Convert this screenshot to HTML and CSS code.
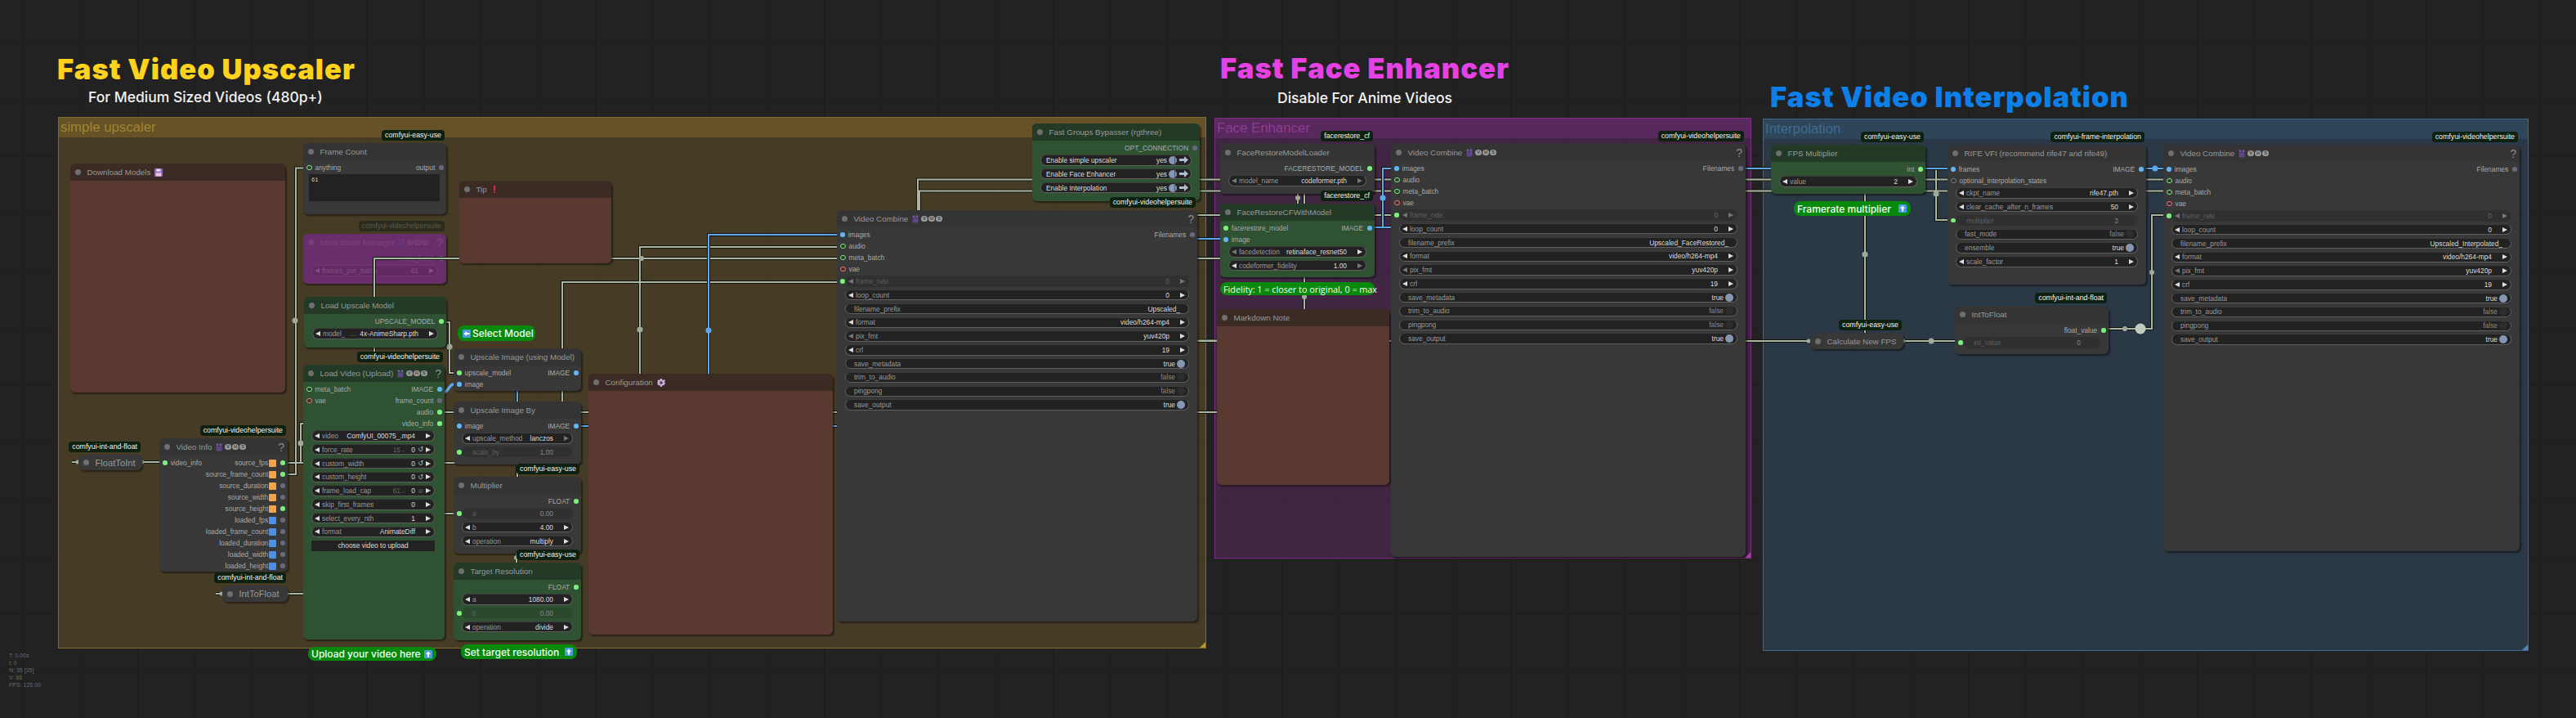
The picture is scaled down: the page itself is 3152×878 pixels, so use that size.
FILE: index.html
```html
<!DOCTYPE html>
<html lang="en">
<head>
<meta charset="utf-8">
<title>ComfyUI workflow</title>
<link rel="stylesheet" href="styles.css">
</head>
<body>
<svg class="sprites" width="0" height="0" aria-hidden="true">
  <symbol id="film" viewBox="0 0 8 10"><circle cx="2" cy="1.7" r="1.5" fill="#7a5aa8"/><circle cx="6" cy="1.7" r="1.5" fill="#7a5aa8"/><rect x="0.5" y="3.5" width="7" height="6" rx="1" fill="#5d4688"/></symbol>
  <symbol id="floppy" viewBox="0 0 10 10"><rect width="10" height="10" rx="1.2" fill="#8f6cc0"/><rect x="2.4" y="0.6" width="5" height="3" fill="#e8e0f0"/><rect x="1.8" y="5.4" width="6.4" height="4" fill="#f2c4dc"/></symbol>
  <symbol id="gear" viewBox="0 0 10 10"><path fill="#c9aee0" d="M4 0h2l.3 1.5 1.1.5L8.7 1.1 10 2.6 9 3.8l.4 1.1L10 5.8 9 7.2l-.4 1.1-1.3-.3-1 .6L6 10H4l-.3-1.4-1-.6-1.3.3L.6 7.2 1 6 0 5l1-1.2-.4-1.2L2 1.1l1.3.9 .4-.5z"/><circle cx="5" cy="5" r="1.8" fill="#4a3a44"/></symbol>
  <symbol id="up" viewBox="0 0 10 10"><rect width="10" height="10" rx="1.2" fill="#4a9be8"/><path fill="#fff" d="M5 1.5 8 5H6v3.5H4V5H2z"/></symbol>
  <symbol id="left" viewBox="0 0 10 10"><rect width="10" height="10" rx="1.2" fill="#4a9be8"/><path fill="#fff" d="M1.5 5 5 2v2h3.5v2H5v2z"/></symbol>
  <symbol id="go" viewBox="0 0 11 9"><path fill="#aebccf" d="M0 3h6V0l5 4.5L6 9V6H0z"/></symbol>
  <path id="links-gray" d="M352 580H362V205.500H372M458 431V316H1493M458 316V363M352 566H688V345H1024M544 504H783V302H1024M783 504H1489M352 726H372M544 628H556M1123 300V219.500H2648M1125 300V233.500H2648M1400 300V263H1702M1030 416.500H1493M1465 504H1489M1465 417H2215M546 394H550V456H555M371 518H368V565M633 568V583M632 677V688M1588 237V249M1596 237V249M1596 339V378M2282 237V407M2356 206H2369V269H2383M2329 417H2392M2580 402H2633V263H2648M88 565H96M174 565H195M264 726H272"/>
  <path id="links-blue" d="M711 521H867V287H1024M711 521H1024M1300 521V292H1493M633 478V491M1682 278H1692V206H1702M1682 278H1702M2135 206H2383M2626 206H2648"/>
</svg>

<main class="canvas">
  <section class="group g-yellow"><h2>simple upscaler</h2></section>
  <section class="group g-purple"><h2>Face Enhancer</h2></section>
  <section class="group g-blue"><h2>Interpolation</h2></section>

  <svg class="links" width="3152" height="878" viewBox="0 0 3152 878" aria-hidden="true">
    <use href="#links-gray" class="casing"/>
    <use href="#links-gray" class="line-gray"/>
    <use href="#links-blue" class="casing"/>
    <use href="#links-blue" class="line-blue"/>
    <path class="line-blue wave" d="M544 479C549 479 549 470 555 470"/>
    <g class="dots-gray">
      <circle cx="361" cy="392" r="3.500"/><circle cx="550" cy="424" r="3.500"/><circle cx="368" cy="542" r="3.500"/>
      <circle cx="783" cy="403" r="3.500"/><circle cx="785" cy="316" r="3"/><circle cx="632" cy="682" r="3"/>
      <circle cx="1588" cy="242" r="3"/><circle cx="1596" cy="363" r="3"/><circle cx="2282" cy="311" r="3.500"/>
      <circle cx="2369" cy="237" r="3.500"/><circle cx="2363" cy="417" r="3.500"/><circle cx="2600" cy="402" r="3"/>
      <circle cx="2633" cy="333" r="3"/><circle class="big" cx="2619" cy="402" r="6.500"/>
      <circle cx="95" cy="565" r="2.500"/><circle cx="174" cy="565" r="2.500"/><circle cx="271" cy="726" r="2.500"/>
      <circle cx="351" cy="726" r="2.500"/><circle cx="2213" cy="417" r="2.500"/><circle cx="2329" cy="417" r="2.500"/>
    </g>
    <g class="dots-blue">
      <circle cx="867" cy="404" r="3.500"/><circle cx="1692" cy="242" r="3.500"/><circle cx="2637" cy="206" r="3.500"/>
    </g>
  </svg>

  <h1 class="head h-upscale">Fast Video Upscaler</h1>
  <p class="sub s-upscale">For Medium Sized Videos (480p+)</p>
  <h1 class="head h-face">Fast Face Enhancer</h1>
  <p class="sub s-face">Disable For Anime Videos</p>
  <h1 class="head h-interp">Fast Video Interpolation</h1>

  <!-- simple upscaler -->
  <article class="node brown n-download">
    <header class="title"><i class="pip"></i><span>Download Models</span><svg class="ico"><use href="#floppy"/></svg></header>
  </article>

  <article class="node n-frame">
    <span class="badge">comfyui-easy-use</span>
    <header class="title"><i class="pip"></i><span>Frame Count</span></header>
    <div class="slots">
      <div class="row"><i class="s ring green"></i><span>anything</span><span class="out">output</span><i class="s purple"></i></div>
    </div>
    <div class="area">61</div>
  </article>

  <article class="node faded n-meta">
    <span class="badge">comfyui-videohelpersuite</span>
    <header class="title"><i class="pip"></i><span>Meta Batch Manager</span><svg class="film"><use href="#film"/></svg><b class="vhs">V</b><b class="vhs">H</b><b class="vhs">S</b><em class="help">?</em></header>
    <div class="slots">
      <div class="row"><span class="out">meta_batch</span><i class="s purple"></i></div>
    </div>
    <div class="widgets">
      <div class="w"><i class="al"></i><span class="k">frames_per_batch</span><span class="v">61</span><i class="ar"></i></div>
    </div>
  </article>

  <article class="node green-node n-upmodel">
    <header class="title"><i class="pip"></i><span>Load Upscale Model</span></header>
    <div class="slots">
      <div class="row"><span class="out">UPSCALE_MODEL</span><i class="s green"></i></div>
    </div>
    <div class="widgets">
      <div class="w"><i class="al"></i><span class="k">model_</span><span class="h">...</span><span class="v">4x-AnimeSharp.pth</span><i class="ar"></i></div>
    </div>
  </article>

  <article class="node green-node n-loadvideo">
    <span class="badge">comfyui-videohelpersuite</span>
    <header class="title"><i class="pip"></i><span>Load Video (Upload)</span><svg class="film"><use href="#film"/></svg><b class="vhs">V</b><b class="vhs">H</b><b class="vhs">S</b><em class="help">?</em></header>
    <div class="slots">
      <div class="row"><i class="s ring green"></i><span>meta_batch</span><span class="out">IMAGE</span><i class="s blue"></i></div>
      <div class="row"><i class="s ring red"></i><span>vae</span><span class="out">frame_count</span><i class="s gray"></i></div>
      <div class="row"><span class="out">audio</span><i class="s green"></i></div>
      <div class="row"><span class="out">video_info</span><i class="s green"></i></div>
    </div>
    <div class="widgets">
      <div class="w"><i class="al"></i><span class="k">video</span><span class="v">ComfyUI_00075_.mp4</span><i class="ar"></i></div>
      <div class="w"><i class="al"></i><span class="k">force_rate</span><span class="h">15←</span><span class="v">0</span><span class="r">↺</span><i class="ar"></i></div>
      <div class="w"><i class="al"></i><span class="k">custom_width</span><span class="v">0</span><span class="r">↺</span><i class="ar"></i></div>
      <div class="w"><i class="al"></i><span class="k">custom_height</span><span class="v">0</span><span class="r">↺</span><i class="ar"></i></div>
      <div class="w"><i class="al"></i><span class="k">frame_load_cap</span><span class="h">61←</span><span class="v">0</span><span class="r dimmed">⊘</span><i class="ar"></i></div>
      <div class="w"><i class="al"></i><span class="k">skip_first_frames</span><span class="v">0</span><i class="ar"></i></div>
      <div class="w"><i class="al"></i><span class="k">select_every_nth</span><span class="v">1</span><i class="ar"></i></div>
      <div class="w"><i class="al"></i><span class="k">format</span><span class="v">AnimateDiff</span><i class="ar"></i></div>
      <div class="w btn">choose video to upload</div>
    </div>
  </article>

  <article class="node n-info">
    <span class="badge">comfyui-videohelpersuite</span>
    <header class="title"><i class="pip"></i><span>Video Info</span><svg class="film"><use href="#film"/></svg><b class="vhs">V</b><b class="vhs">H</b><b class="vhs">S</b><em class="help">?</em></header>
    <div class="slots">
      <div class="row"><i class="s green"></i><span>video_info</span><span class="out">source_fps</span><i class="sq orange"></i><i class="s green"></i></div>
      <div class="row"><span class="out">source_frame_count</span><i class="sq orange"></i><i class="s green"></i></div>
      <div class="row"><span class="out">source_duration</span><i class="sq orange"></i><i class="s gray"></i></div>
      <div class="row"><span class="out">source_width</span><i class="sq orange"></i><i class="s gray"></i></div>
      <div class="row"><span class="out">source_height</span><i class="sq orange"></i><i class="s green"></i></div>
      <div class="row"><span class="out">loaded_fps</span><i class="sq sky"></i><i class="s gray"></i></div>
      <div class="row"><span class="out">loaded_frame_count</span><i class="sq sky"></i><i class="s gray"></i></div>
      <div class="row"><span class="out">loaded_duration</span><i class="sq sky"></i><i class="s gray"></i></div>
      <div class="row"><span class="out">loaded_width</span><i class="sq sky"></i><i class="s gray"></i></div>
      <div class="row"><span class="out">loaded_height</span><i class="sq sky"></i><i class="s gray"></i></div>
    </div>
  </article>

  <article class="node collapsed n-floatint">
    <span class="badge">comfyui-int-and-float</span>
    <header class="title"><i class="pip"></i><span>FloatToInt</span></header>
  </article>
  <article class="node collapsed n-intfloat">
    <span class="badge">comfyui-int-and-float</span>
    <header class="title"><i class="pip"></i><span>IntToFloat</span></header>
  </article>

  <p class="pill p-upload"><span>Upload your video here</span><svg class="ico"><use href="#up"/></svg></p>
  <p class="pill p-select"><svg class="ico"><use href="#left"/></svg><span>Select Model</span></p>

  <article class="node n-upimg">
    <header class="title"><i class="pip"></i><span>Upscale Image (using Model)</span></header>
    <div class="slots">
      <div class="row"><i class="s green"></i><span>upscale_model</span><span class="out">IMAGE</span><i class="s blue"></i></div>
      <div class="row"><i class="s blue"></i><span>image</span></div>
    </div>
  </article>

  <article class="node n-upby">
    <header class="title"><i class="pip"></i><span>Upscale Image By</span></header>
    <div class="slots">
      <div class="row"><i class="s blue"></i><span>image</span><span class="out">IMAGE</span><i class="s blue"></i></div>
    </div>
    <div class="widgets">
      <div class="w"><i class="al"></i><span class="k">upscale_method</span><span class="v">lanczos</span><i class="ar dim"></i></div>
      <div class="w d"><i class="s green pin"></i><span class="k">scale_by</span><span class="v">1.00</span></div>
    </div>
  </article>

  <article class="node n-multi">
    <span class="badge">comfyui-easy-use</span>
    <header class="title"><i class="pip"></i><span>Multiplier</span></header>
    <div class="slots">
      <div class="row"><span class="out">FLOAT</span><i class="s green"></i></div>
    </div>
    <div class="widgets">
      <div class="w d"><i class="s green pin"></i><span class="k">a</span><span class="v">0.00</span></div>
      <div class="w"><i class="al"></i><span class="k">b</span><span class="v">4.00</span><i class="ar"></i></div>
      <div class="w"><i class="al"></i><span class="k">operation</span><span class="v">multiply</span><i class="ar"></i></div>
    </div>
  </article>

  <article class="node green-node n-target">
    <span class="badge">comfyui-easy-use</span>
    <header class="title"><i class="pip"></i><span>Target Resolution</span></header>
    <div class="slots">
      <div class="row"><span class="out">FLOAT</span><i class="s green"></i></div>
    </div>
    <div class="widgets">
      <div class="w"><i class="al"></i><span class="k">a</span><span class="v">1080.00</span><i class="ar"></i></div>
      <div class="w d"><i class="s green pin"></i><span class="k">b</span><span class="v">0.00</span></div>
      <div class="w"><i class="al"></i><span class="k">operation</span><span class="v">divide</span><i class="ar"></i></div>
    </div>
  </article>
  <p class="pill p-target"><span>Set target resolution</span><svg class="ico"><use href="#up"/></svg></p>

  <article class="node brown n-tip">
    <header class="title"><i class="pip"></i><span>Tip</span><i class="bang"></i></header>
  </article>

  <article class="node brown n-config">
    <header class="title"><i class="pip"></i><span>Configuration</span><svg class="ico"><use href="#gear"/></svg></header>
  </article>

  <article class="node green-node n-bypass">
    <header class="title"><i class="pip"></i><span>Fast Groups Bypasser (rgthree)</span></header>
    <div class="slots">
      <div class="row"><span class="out">OPT_CONNECTION</span><i class="s purple"></i></div>
    </div>
    <div class="widgets">
      <div class="w g"><span class="k">Enable simple upscaler</span><span class="v">yes</span><i class="c"></i><svg class="go"><use href="#go"/></svg></div>
      <div class="w g"><span class="k">Enable Face Enhancer</span><span class="v">yes</span><i class="c"></i><svg class="go"><use href="#go"/></svg></div>
      <div class="w g"><span class="k">Enable Interpolation</span><span class="v">yes</span><i class="c"></i><svg class="go"><use href="#go"/></svg></div>
    </div>
  </article>

  <article class="node n-combine1">
    <span class="badge">comfyui-videohelpersuite</span>
    <header class="title"><i class="pip"></i><span>Video Combine</span><svg class="film"><use href="#film"/></svg><b class="vhs">V</b><b class="vhs">H</b><b class="vhs">S</b><em class="help">?</em></header>
    <div class="slots">
      <div class="row"><i class="s blue"></i><span>images</span><span class="out">Filenames</span><i class="s purple"></i></div>
      <div class="row"><i class="s ring green"></i><span>audio</span></div>
      <div class="row"><i class="s ring green"></i><span>meta_batch</span></div>
      <div class="row"><i class="s ring red"></i><span>vae</span></div>
    </div>
    <div class="widgets">
      <div class="w d on"><i class="s green pin"></i><i class="al dim"></i><span class="k">frame_rate</span><span class="v">0</span><i class="ar dim"></i></div>
      <div class="w"><i class="al"></i><span class="k">loop_count</span><span class="v">0</span><i class="ar"></i></div>
      <div class="w x"><span class="k">filename_prefix</span><span class="v">Upscaled_</span></div>
      <div class="w"><i class="al"></i><span class="k">format</span><span class="v">video/h264-mp4</span><i class="ar"></i></div>
      <div class="w"><i class="al dim"></i><span class="k">pix_fmt</span><span class="v">yuv420p</span><i class="ar"></i></div>
      <div class="w"><i class="al"></i><span class="k">crf</span><span class="v">19</span><i class="ar"></i></div>
      <div class="w t"><span class="k">save_metadata</span><span class="v">true</span><i class="c"></i></div>
      <div class="w t off"><span class="k">trim_to_audio</span><span class="v">false</span><i class="c"></i></div>
      <div class="w t off"><span class="k">pingpong</span><span class="v">false</span><i class="c"></i></div>
      <div class="w t"><span class="k">save_output</span><span class="v">true</span><i class="c"></i></div>
    </div>
  </article>

  <!-- face enhancer -->
  <article class="node n-facemodel">
    <span class="badge">facerestore_cf</span>
    <header class="title"><i class="pip"></i><span>FaceRestoreModelLoader</span></header>
    <div class="slots">
      <div class="row"><span class="out">FACERESTORE_MODEL</span><i class="s green"></i></div>
    </div>
    <div class="widgets">
      <div class="w"><i class="al dim"></i><span class="k">model_name</span><span class="v">codeformer.pth</span><i class="ar dim"></i></div>
    </div>
  </article>

  <article class="node green-node n-facecf">
    <span class="badge">facerestore_cf</span>
    <header class="title"><i class="pip"></i><span>FaceRestoreCFWithModel</span></header>
    <div class="slots">
      <div class="row"><i class="s green"></i><span>facerestore_model</span><span class="out">IMAGE</span><i class="s blue"></i></div>
      <div class="row"><i class="s blue"></i><span>image</span></div>
    </div>
    <div class="widgets">
      <div class="w"><i class="al dim"></i><span class="k">facedetection</span><span class="v">retinaface_resnet50</span><i class="ar"></i></div>
      <div class="w"><i class="al"></i><span class="k">codeformer_fidelity</span><span class="v">1.00</span><i class="ar dim"></i></div>
    </div>
  </article>
  <p class="pill p-fidelity"><span>Fidelity: 1 = closer to original, 0 = max</span></p>

  <article class="node brown n-note">
    <header class="title"><i class="pip"></i><span>Markdown Note</span></header>
  </article>

  <article class="node n-combine2">
    <span class="badge">comfyui-videohelpersuite</span>
    <header class="title"><i class="pip"></i><span>Video Combine</span><svg class="film"><use href="#film"/></svg><b class="vhs">V</b><b class="vhs">H</b><b class="vhs">S</b><em class="help">?</em></header>
    <div class="slots">
      <div class="row"><i class="s blue"></i><span>images</span><span class="out">Filenames</span><i class="s purple"></i></div>
      <div class="row"><i class="s ring green"></i><span>audio</span></div>
      <div class="row"><i class="s ring green"></i><span>meta_batch</span></div>
      <div class="row"><i class="s ring red"></i><span>vae</span></div>
    </div>
    <div class="widgets">
      <div class="w d on"><i class="s green pin"></i><i class="al dim"></i><span class="k">frame_rate</span><span class="v">0</span><i class="ar dim"></i></div>
      <div class="w"><i class="al"></i><span class="k">loop_count</span><span class="v">0</span><i class="ar"></i></div>
      <div class="w x"><span class="k">filename_prefix</span><span class="v">Upscaled_FaceRestored_</span></div>
      <div class="w"><i class="al"></i><span class="k">format</span><span class="v">video/h264-mp4</span><i class="ar"></i></div>
      <div class="w"><i class="al dim"></i><span class="k">pix_fmt</span><span class="v">yuv420p</span><i class="ar"></i></div>
      <div class="w"><i class="al"></i><span class="k">crf</span><span class="v">19</span><i class="ar"></i></div>
      <div class="w t"><span class="k">save_metadata</span><span class="v">true</span><i class="c"></i></div>
      <div class="w t off"><span class="k">trim_to_audio</span><span class="v">false</span><i class="c"></i></div>
      <div class="w t off"><span class="k">pingpong</span><span class="v">false</span><i class="c"></i></div>
      <div class="w t"><span class="k">save_output</span><span class="v">true</span><i class="c"></i></div>
    </div>
  </article>

  <!-- interpolation -->
  <article class="node green-node n-fps">
    <span class="badge">comfyui-easy-use</span>
    <header class="title"><i class="pip"></i><span>FPS Multiplier</span></header>
    <div class="slots">
      <div class="row"><span class="out">int</span><i class="s green"></i></div>
    </div>
    <div class="widgets">
      <div class="w"><i class="al"></i><span class="k">value</span><span class="v">2</span><i class="ar"></i></div>
    </div>
  </article>
  <p class="pill p-rate"><span>Framerate multiplier</span><svg class="ico"><use href="#up"/></svg></p>

  <article class="node n-rife">
    <span class="badge">comfyui-frame-interpolation</span>
    <header class="title"><i class="pip"></i><span>RIFE VFI (recommend rife47 and rife49)</span></header>
    <div class="slots">
      <div class="row"><i class="s blue"></i><span>frames</span><span class="out">IMAGE</span><i class="s blue"></i></div>
      <div class="row"><i class="s ring gray"></i><span>optional_interpolation_states</span></div>
    </div>
    <div class="widgets">
      <div class="w"><i class="al"></i><span class="k">ckpt_name</span><span class="v">rife47.pth</span><i class="ar"></i></div>
      <div class="w"><i class="al"></i><span class="k">clear_cache_after_n_frames</span><span class="v">50</span><i class="ar"></i></div>
      <div class="w d"><i class="s green pin"></i><span class="k">multiplier</span><span class="v">3</span></div>
      <div class="w t off"><span class="k">fast_mode</span><span class="v">false</span><i class="c"></i></div>
      <div class="w t"><span class="k">ensemble</span><span class="v">true</span><i class="c"></i></div>
      <div class="w"><i class="al"></i><span class="k">scale_factor</span><span class="v">1</span><i class="ar"></i></div>
    </div>
  </article>

  <article class="node n-int2">
    <span class="badge">comfyui-int-and-float</span>
    <header class="title"><i class="pip"></i><span>IntToFloat</span></header>
    <div class="slots">
      <div class="row"><span class="out">float_value</span><i class="s green"></i></div>
    </div>
    <div class="widgets">
      <div class="w d"><i class="s green pin"></i><span class="k">int_value</span><span class="v">0</span></div>
    </div>
  </article>

  <article class="node collapsed n-calc">
    <span class="badge">comfyui-easy-use</span>
    <header class="title"><i class="pip"></i><span>Calculate New FPS</span></header>
  </article>

  <article class="node n-combine3">
    <span class="badge">comfyui-videohelpersuite</span>
    <header class="title"><i class="pip"></i><span>Video Combine</span><svg class="film"><use href="#film"/></svg><b class="vhs">V</b><b class="vhs">H</b><b class="vhs">S</b><em class="help">?</em></header>
    <div class="slots">
      <div class="row"><i class="s blue"></i><span>images</span><span class="out">Filenames</span><i class="s purple"></i></div>
      <div class="row"><i class="s ring green"></i><span>audio</span></div>
      <div class="row"><i class="s ring green"></i><span>meta_batch</span></div>
      <div class="row"><i class="s ring red"></i><span>vae</span></div>
    </div>
    <div class="widgets">
      <div class="w d on"><i class="s green pin"></i><i class="al dim"></i><span class="k">frame_rate</span><span class="v">0</span><i class="ar dim"></i></div>
      <div class="w"><i class="al"></i><span class="k">loop_count</span><span class="v">0</span><i class="ar"></i></div>
      <div class="w x"><span class="k">filename_prefix</span><span class="v">Upscaled_Interpolated_</span></div>
      <div class="w"><i class="al"></i><span class="k">format</span><span class="v">video/h264-mp4</span><i class="ar"></i></div>
      <div class="w"><i class="al dim"></i><span class="k">pix_fmt</span><span class="v">yuv420p</span><i class="ar"></i></div>
      <div class="w"><i class="al"></i><span class="k">crf</span><span class="v">19</span><i class="ar"></i></div>
      <div class="w t"><span class="k">save_metadata</span><span class="v">true</span><i class="c"></i></div>
      <div class="w t off"><span class="k">trim_to_audio</span><span class="v">false</span><i class="c"></i></div>
      <div class="w t off"><span class="k">pingpong</span><span class="v">false</span><i class="c"></i></div>
      <div class="w t"><span class="k">save_output</span><span class="v">true</span><i class="c"></i></div>
    </div>
  </article>

  <div class="stats">T: 0.00s<br>I: 0<br>N: 35 [35]<br>V: 86<br>FPS: 125.00</div>
</main>
</body>
</html>
```
FILE: styles.css
```css
* { box-sizing: border-box; }
html, body { margin: 0; padding: 0; background: #222; }
body { font-family: "Liberation Sans", Arial, sans-serif; overflow: hidden; }
.sprites { position: absolute; }

.canvas {
  position: relative;
  width: 3152px;
  height: 878px;
  overflow: hidden;
  background-color: #222;
  background-image:
    linear-gradient(#1d1d1d 1px, transparent 1px),
    linear-gradient(90deg, #1d1d1d 1px, transparent 1px);
  background-size: 70px 70px;
  background-position: 28px 51px;
}

/* Groups */
.group { position: absolute; border: 1px solid; }
.group h2 {
  margin: 0;
  height: 24px;
  padding: 2px 0 0 2px;
  font-size: 16.8px;
  font-weight: 400;
  line-height: 20px;
}
.group::after {
  content: "";
  position: absolute;
  right: 0;
  bottom: 0;
  width: 7px;
  height: 7px;
  clip-path: polygon(100% 0, 100% 100%, 0 100%);
}
.g-yellow { left: 71px; top: 143px; width: 1405px; height: 650px; background: rgba(154,124,50,.3); border-color: #7d6a2c; }
.g-yellow h2 { background: #655227; color: #a08431; }
.g-yellow::after { background: #b8962e; }
.g-purple { left: 1486px; top: 144px; width: 657px; height: 539px; background: rgba(140,50,150,.3); border-color: #7a2f80; }
.g-purple h2 { background: #58285e; color: #8e3d92; }
.g-purple::after { background: #a83db0; }
.g-blue { left: 2157px; top: 145px; width: 937px; height: 651px; background: rgba(65,112,155,.3); border-color: #41688a; }
.g-blue h2 { background: #2f4559; color: #3f6c92; }
.g-blue::after { background: #4f86b8; }

/* Links */
.links { position: absolute; left: 0; top: 0; z-index: 1; }
.links use { fill: none; }
.casing { stroke: #14140e; stroke-width: 4; fill: none; }
.line-gray { stroke: #aab5a3; stroke-width: 2; fill: none; }
.line-blue { stroke: #5ca8ee; stroke-width: 2; fill: none; }
.wave { stroke-width: 3.500; }
.dots-gray { fill: #9fab9a; }
.dots-gray .big { fill: #c2cdc2; }
.dots-blue { fill: #5ca8ee; }

/* Headings */
.head {
  position: absolute;
  margin: 0;
  font-family: Inter, "Noto Sans", sans-serif;
  font-weight: 900;
  font-size: 34.5px;
  letter-spacing: 1px;
  line-height: 38px;
  white-space: nowrap;
}
.h-upscale { left: 70px; top: 66px; color: #ffd21c; }
.h-face { left: 1493px; top: 65px; color: #e641e2; }
.h-interp { left: 2166px; top: 100px; color: #0d7fe9; }
.sub {
  position: absolute;
  margin: 0;
  font-family: Inter, "Noto Sans", sans-serif;
  font-weight: 500;
  font-size: 17.5px;
  line-height: 20px;
  color: #f2f2f2;
  white-space: nowrap;
}
.s-upscale { left: 108px; top: 109px; }
.s-face { left: 1563px; top: 110px; }

/* Node frame */
.node {
  position: absolute;
  z-index: 2;
  display: flex;
  flex-direction: column;
  background: #383838;
  border-radius: 5.600px;
  box-shadow: 1.500px 2px 2px rgba(0,0,0,.45);
  font-size: 8.400px;
  color: #aaa;
}
.title {
  display: flex;
  flex: none;
  align-items: center;
  height: 21px;
  padding-left: 6px;
  background: #343434;
  border-radius: 5.600px 5.600px 0 0;
  font-size: 9.800px;
  color: #999;
  white-space: nowrap;
}
.pip {
  flex: none;
  width: 7px;
  height: 7px;
  margin-right: 7.500px;
  border-radius: 50%;
  background: #6f6f6f;
}
.ico { flex: none; width: 10px; height: 10px; margin-left: 5px; }
.film { flex: none; width: 8px; height: 10px; margin: 0 3px 0 5px; }
.vhs {
  flex: none;
  width: 7.500px;
  height: 7.500px;
  margin-right: 1.500px;
  border-radius: 50%;
  background: #9b9b9b;
  color: #3c3c3c;
  font-size: 5.500px;
  line-height: 7.500px;
  text-align: center;
}
.help {
  margin-left: auto;
  padding-right: 4px;
  font-size: 14px;
  font-style: normal;
  line-height: 14px;
  color: #8a8a8a;
}
.bang { width: 2px; height: 9px; margin-left: 8px; background: linear-gradient(#d9274f 70%, transparent 70%, transparent 82%, #d9274f 82%); }

.badge {
  position: absolute;
  right: 2px;
  bottom: calc(100% + 3px);
  z-index: 2;
  padding: 0 4px;
  height: 13px;
  border-radius: 4px;
  background: #0e2110;
  color: #f4f4f4;
  font-size: 8.800px;
  line-height: 13px;
  white-space: nowrap;
}

.brown { background: #593930; }
.brown .title { background: #3b2b24; }
.green-node { background: #2f5233; }
.green-node .title { background: #233a26; }
.green-node .w.d { background: rgba(0,0,0,.1); }
.faded { z-index: 0; background: #6b2e6c; color: #85508a; }
.faded .title { background: transparent; color: #7a467c; }
.faded .pip, .faded .vhs { background: #75407a; color: #6b2e6c; }
.faded .film { opacity: .3; }
.faded .help { color: #7d4a7e; }
.faded .s { background: #8a5a8c; }
.faded .w { background: #622a62; border-color: #6c3a70; }
.faded .k, .faded .v { color: #85508a; }
.faded .al { border-right-color: #85508a; }
.faded .ar { border-left-color: #85508a; }
.faded .badge { background: #2c2c1e; color: #5a5a4a; }

.collapsed { border-radius: 7px; }
.collapsed .title { background: #383838; border-radius: 7px; height: 100%; font-size: 11.200px; }
.n-calc .title { font-size: 9.800px; }

/* Slots */
.slots { display: flex; flex-direction: column; flex: none; padding-top: 2px; }
.row {
  display: flex;
  align-items: center;
  height: 14px;
  padding: 0 3.200px 0 4.200px;
  white-space: nowrap;
}
.row > .s:first-child { margin-right: 3.900px; }
.out { margin-left: auto; }
.row > .out + .s { margin-left: 5px; }
.s { flex: none; width: 5.600px; height: 5.600px; border-radius: 50%; }
.s.blue { background: #64b5f6; }
.s.green { background: #7cf07c; }
.s.red { background: #ff6e6e; }
.s.gray { background: #6a6a78; }
.s.purple { background: #67677d; }
.s.ring { background: #333; border: 1.600px solid; width: 6.400px; height: 6.400px; }
.s.ring.green { border-color: #7cf07c; }
.s.ring.red { border-color: #ff6e6e; }
.s.ring.gray { border-color: #7a7a88; }
.sq { flex: none; width: 9px; height: 9px; margin: 0 5px 0 1px; border-radius: 1px; }
.orange { background: #f5a24b; }
.sky { background: #4a8fe8; }
.row > .sq + .s { margin-left: 0; }

/* Widgets */
.widgets {
  display: flex;
  flex-direction: column;
  flex: none;
  gap: 3.400px;
  margin: 1.300px 10px 0;
}
.w {
  position: relative;
  display: flex;
  align-items: center;
  height: 13.400px;
  border: 1px solid #5f5f5f;
  border-top-color: #3c3c3c;
  border-radius: 7px;
  background: #222;
  white-space: nowrap;
}
.al, .ar {
  flex: none;
  width: 0;
  height: 0;
  border-top: 3.500px solid transparent;
  border-bottom: 3.500px solid transparent;
}
.al { margin: 0 3px 0 3px; border-right: 6.500px solid #ddd; }
.ar { margin: 0 4px 0 13px; border-left: 6.500px solid #ddd; }
.al.dim { border-right-color: #777; }
.ar.dim { border-left-color: #777; }
.k { color: #999; overflow: hidden; }
.v { margin-left: auto; color: #ddd; }
.h { margin-left: auto; color: #666; }
.h + .v { margin-left: 5px; }
.r { width: 9px; margin: 0 -11px 0 2px; color: #bbb; font-family: "DejaVu Sans", sans-serif; font-size: 8px; text-align: center; }
.r.dimmed { color: #666; }

.w.x .k, .w.t .k { margin-left: 10px; }
.w.x .v { margin-right: 10px; }
.w.t .v { color: #ddd; }
.c { flex: none; width: 10px; height: 10px; margin: 0 4px 0 2px; border-radius: 50%; background: #8596b3; }
.w.t.off .v { color: #888; }
.w.t.off .c { background: #2d2d2d; }

.w.d { border-color: transparent; background: rgba(0,0,0,.14); }
.w.d .k { margin-left: 12px; color: #5e5e5e; }
.w.d .v { margin-right: 23px; color: #888; }
.w.d.on .k { margin-left: 0; }
.w.d.on .v { margin-right: 0; color: #666; }
.pin { position: absolute; left: -6.800px; top: calc(50% - 2.800px); }

.w.btn { justify-content: center; border: 0; border-radius: 0; color: #ddd; }

.w.g .k { margin-left: 6px; color: #ddd; }
.w.g .c { margin: 0 3px 0 2px; }
.go { flex: none; width: 11px; height: 9px; margin-right: 3px; padding: 0; }
.w.g::after {
  content: "";
  position: absolute;
  right: 19px;
  top: 0;
  bottom: 0;
  width: 1px;
  background: #555;
}

.area {
  flex: none;
  height: 33px;
  margin: 1px 8px 0 7px;
  padding: 3px;
  background: #222;
  color: #ccc;
  font-family: "Liberation Mono", monospace;
  font-size: 7px;
  line-height: 8px;
}

/* Green callouts */
.pill {
  position: absolute;
  z-index: 3;
  display: flex;
  align-items: center;
  justify-content: space-between;
  margin: 0;
  padding: 0 5px 0 4px;
  border-radius: 8px;
  background: #078a0b;
  color: #f4fff4;
  font-family: Inter, "Noto Sans", sans-serif;
  font-weight: 500;
  font-size: 12px;
  white-space: nowrap;
}
.pill .ico { margin: 0; }
.p-upload { left: 377px; top: 791px; width: 157px; height: 17px; }
.p-select { left: 560px; top: 398px; width: 95px; height: 19px; justify-content: flex-start; gap: 2px; padding-left: 6px; }
.p-target { left: 564px; top: 788px; width: 142px; height: 18px; }
.p-rate { left: 2195px; top: 246px; width: 143px; height: 18px; }
.p-fidelity { left: 1493px; top: 345px; width: 189px; height: 16px; font-family: "Open Sans", sans-serif; font-size: 10.800px; font-weight: 400; }

/* Node placement on the canvas */
.n-download { left: 86px; top: 200px; width: 263px; height: 280px; }
.n-frame { left: 371px; top: 175px; width: 175px; height: 87px; }
.n-meta { left: 371px; top: 286px; width: 175px; height: 61px; }
.n-upmodel { left: 372px; top: 363px; width: 174px; height: 62px; }
.n-loadvideo { left: 371px; top: 446px; width: 173px; height: 336px; }
.n-loadvideo .widgets { margin-right: 12px; }
.n-info { left: 195px; top: 536px; width: 157px; height: 163px; }
.n-floatint { left: 96px; top: 556px; width: 78px; height: 19px; }
.n-intfloat { left: 272px; top: 716px; width: 80px; height: 20px; }
.n-upimg { left: 555px; top: 426px; width: 156px; height: 52px; }
.n-upby { left: 555px; top: 491px; width: 156px; height: 77px; }
.n-multi { left: 555px; top: 583px; width: 156px; height: 94px; }
.n-target { left: 555px; top: 688px; width: 156px; height: 95px; }
.n-tip { left: 562px; top: 221px; width: 186px; height: 101px; }
.n-config { left: 720px; top: 457px; width: 299px; height: 319px; }
.n-combine1 { left: 1024px; top: 257px; width: 441px; height: 503px; }
.n-bypass { left: 1263px; top: 151px; width: 205px; height: 95px; }
.n-facemodel { left: 1493px; top: 176px; width: 189px; height: 61px; }
.n-facecf { left: 1493px; top: 249px; width: 189px; height: 90px; }
.n-note { left: 1489px; top: 378px; width: 211px; height: 215px; }
.n-combine2 { left: 1702px; top: 176px; width: 434px; height: 505px; }
.n-fps { left: 2167px; top: 177px; width: 189px; height: 60px; }
.n-rife { left: 2383px; top: 177px; width: 243px; height: 171px; }
.n-int2 { left: 2392px; top: 374px; width: 188px; height: 59px; }
.n-calc { left: 2215px; top: 407px; width: 114px; height: 20px; }
.n-combine3 { left: 2647px; top: 177px; width: 436px; height: 497px; }

.stats {
  position: absolute;
  left: 11px;
  top: 797px;
  color: #6a6a6a;
  font-size: 7px;
  line-height: 9px;
}
```
